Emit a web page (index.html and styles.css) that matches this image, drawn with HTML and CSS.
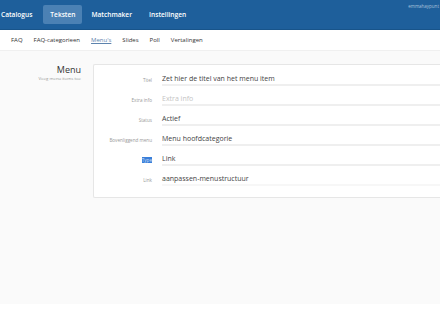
FILE: index.html
```html
<!DOCTYPE html>
<html lang="nl">
<head>
    <meta charset="UTF-8">
    <meta name="viewport" content="width=device-width, initial-scale=1.0">
    <title>Menu's</title>
    <link rel="stylesheet" href="styles.css">
</head>
<body>
    <div class="topbar">
        <nav class="main-nav">
            <a class="main-link first">Catalogus</a>
            <a class="main-link active">Teksten</a>
            <a class="main-link">Matchmaker</a>
            <a class="main-link">Instellingen</a>
        </nav>
        <div class="user">emmahaypunt</div>
    </div>
    <nav class="sub-nav">
        <a class="sub-link">FAQ</a>
        <a class="sub-link">FAQ-categorieen</a>
        <a class="sub-link current">Menu's</a>
        <a class="sub-link">Slides</a>
        <a class="sub-link">Poll</a>
        <a class="sub-link">Vertalingen</a>
    </nav>
    <div class="content">
        <div class="intro">
            <h2>Menu</h2>
            <p>Voeg menu items toe</p>
        </div>
        <div class="card">
            <div class="row">
                <label>Titel</label>
                <div class="field">Zet hier de titel van het menu item</div>
            </div>
            <div class="row">
                <label>Extra info</label>
                <div class="field placeholder">Extra info</div>
            </div>
            <div class="row">
                <label>Status</label>
                <div class="field">Actief</div>
            </div>
            <div class="row">
                <label>Bovenliggend menu</label>
                <div class="field">Menu hoofdcategorie</div>
            </div>
            <div class="row">
                <label><span class="selected">Type</span></label>
                <div class="field">Link</div>
            </div>
            <div class="row">
                <label>Link</label>
                <div class="field faint">aanpassen-menustructuur</div>
            </div>
        </div>
    </div>
</body>
</html>
```

FILE: styles.css
```css
* {
    box-sizing: border-box;
    padding: 0;
    margin: 0;
}

body {
    font-family: "Open Sans", "Liberation Sans", sans-serif;
    background-color: #ffffff;
    color: #333;
    overflow: hidden;
}

.topbar {
    display: flex;
    justify-content: space-between;
    height: 30px;
    background-color: #1e5f9b;
    border-bottom: 1px solid #18548a;
}

.main-nav {
    display: flex;
    align-items: center;
    margin-left: -7px;
}

.main-link {
    padding: 5px 8px;
    margin-right: 1px;
    font-size: 6.6px;
    font-weight: 600;
    color: #ffffff;
    border-radius: 2px;
}

.main-link.active {
    padding: 5px 7px;
    margin: 0 1px 0 2px;
    background-color: #4b81b4;
}

.user {
    padding-top: 3px;
    margin-right: 1px;
    font-size: 4.5px;
    color: #a9c3dc;
    white-space: nowrap;
}

.sub-nav {
    display: flex;
    align-items: center;
    height: 20px;
    padding-left: 11px;
    gap: 11px;
    background-color: #ffffff;
}

.sub-link {
    font-size: 6px;
    color: #333;
}

.sub-link.current {
    color: #5d83ad;
    text-decoration: underline;
}

.content {
    display: flex;
    height: 254px;
    padding-top: 13px;
    background-color: #fafafa;
    border-top: 1px solid #f0f0f0;
}

.intro {
    flex-shrink: 0;
    width: 81px;
    margin-right: 12px;
    text-align: right;
    white-space: nowrap;
}

.intro h2 {
    font-size: 9px;
    font-weight: 400;
    line-height: 11px;
    color: #333;
}

.intro p {
    font-size: 4.3px;
    color: #999;
}

.card {
    flex: 1;
    height: 134px;
    padding: 7px 0 12px;
    background-color: #ffffff;
    border: 1px solid #e6e6e6;
    border-right: none;
    border-radius: 2px 0 0 2px;
}

.row {
    display: flex;
    align-items: flex-end;
    height: 20px;
}

.row:first-child {
    height: 14px;
}

.row label {
    width: 58px;
    padding-bottom: 3px;
    text-align: right;
    font-size: 4.6px;
    color: #999;
    white-space: nowrap;
}

.selected {
    background-color: #3a7fd9;
    color: #c6dbf5;
}

.field {
    flex: 1;
    margin-left: 10px;
    height: 14px;
    padding-top: 2px;
    font-size: 7px;
    color: #444;
    border-bottom: 2px solid #efefef;
}

.field.placeholder {
    color: #c4c4c4;
}

.field.faint {
    border-bottom-color: #f7f7f7;
}
```
